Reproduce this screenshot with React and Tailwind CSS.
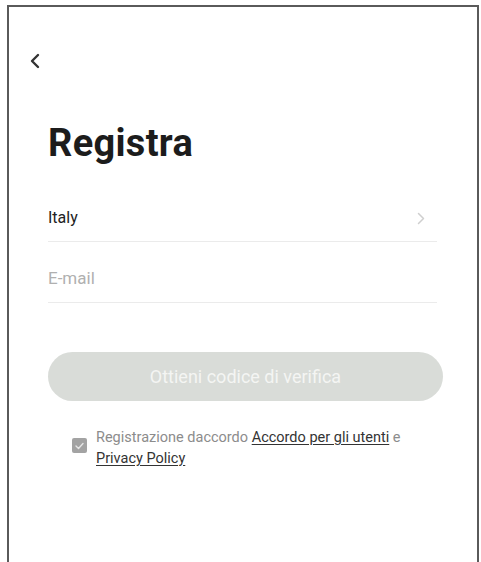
export default function App() {
  return (
    <div className="w-[481px] h-[562px] bg-white overflow-hidden" style={{ fontFamily: 'Roboto, "Liberation Sans", sans-serif' }}>
      <div className="ml-[7px] mt-[5px] w-[472px] h-[570px] border-2 border-[#5a5a5a] bg-white flex flex-col">
        <div className="h-[44px]" />
        <div className="pl-[19px] h-[20px] flex items-center">
          <svg width="14" height="16" viewBox="0 0 14 16" fill="none">
            <path d="M10 2 L4 8 L10 14" stroke="#333" strokeWidth="2.4" strokeLinecap="round" strokeLinejoin="round" />
          </svg>
        </div>
        <div className="pl-[39px] mt-[50px] text-[38px] leading-[44px] font-bold text-[#1c1c1c] tracking-[0.3px]">Registra</div>
        <div className="ml-[39px] mr-[40px] mt-[34px] h-[43px] border-b border-[#ebebeb] flex items-center justify-between">
          <span className="text-[16px] text-[#222] -mt-[4px]">Italy</span>
          <svg className="mr-[12px] -mt-[4px]" width="8" height="13" viewBox="0 0 8 13" fill="none">
            <path d="M1.5 1.5 L6.5 6.5 L1.5 11.5" stroke="#cfcfcf" strokeWidth="1.5" strokeLinecap="round" strokeLinejoin="round" />
          </svg>
        </div>
        <div className="ml-[39px] mr-[40px] mt-[20px] h-[41px] border-b border-[#ebebeb] flex items-center">
          <span className="text-[17px] text-[#b0b0b0] -mt-[6px]">E-mail</span>
        </div>
        <div className="ml-[39px] mr-[34px] mt-[49px] h-[49px] rounded-full bg-[#d9dcd8] flex items-center justify-center">
          <span className="text-[18px] text-[#f4f5f3]">Ottieni codice di verifica</span>
        </div>
        <div className="ml-[63px] mt-[26px] flex items-start gap-[9px]">
          <div className="mt-[11px] w-[15px] h-[15px] rounded-[2px] bg-[#a3a3a3] flex items-center justify-center">
            <svg width="9" height="8" viewBox="0 0 9 8" fill="none">
              <path d="M1 4 L3.5 6.5 L8 1.5" stroke="#e6e6e6" strokeWidth="1.4" strokeLinecap="round" strokeLinejoin="round" />
            </svg>
          </div>
          <div className="text-[14.5px] leading-[21px] text-[#8c8c8c]">
            Registrazione daccordo{' '}
            <span className="text-[#333] underline underline-offset-2">Accordo per gli utenti</span> e
            <br />
            <span className="text-[#333] underline underline-offset-2">Privacy Policy</span>
          </div>
        </div>
      </div>
    </div>
  );
}
